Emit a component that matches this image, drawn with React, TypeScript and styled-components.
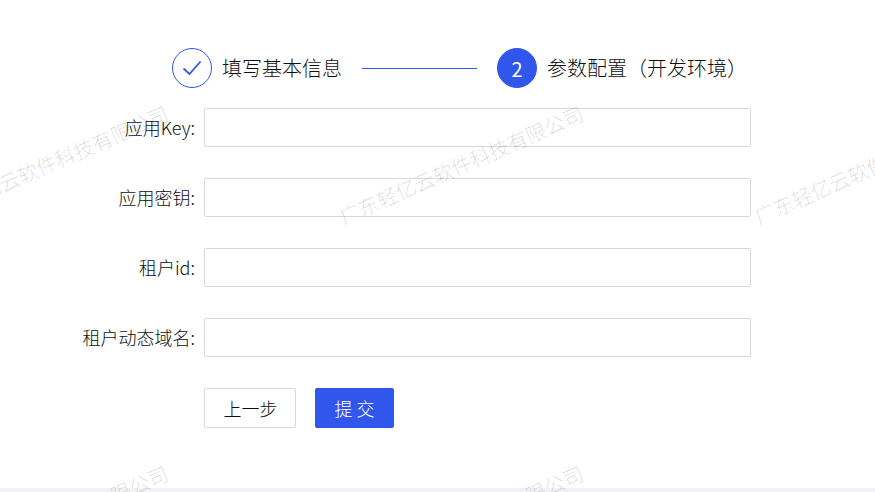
import React from "react"
import styled, { createGlobalStyle } from "styled-components"

const GlobalStyle = createGlobalStyle`
    html, body {
        margin: 0;
        padding: 0;
        background: #fff;
        overflow: hidden;
    }
    body {
        font-family: "Noto Sans CJK SC", "Noto Sans", sans-serif;
        font-weight: 300;
        color: #0f0f0f;
    }
`;

const Page = styled.div`
    position: relative;
    width: 875px;
    height: 492px;
    overflow: hidden;
    display: flex;
    flex-direction: column;
    padding-top: 48px;
    box-sizing: border-box;
    background: #fff;
`;

const Steps = styled.div`
    display: flex;
    align-items: center;
    height: 40px;
    padding-left: 172px;
    margin-bottom: 20px;
`;

const StepCircle = styled.div<{ $active?: boolean }>`
    width: 40px;
    height: 40px;
    box-sizing: border-box;
    border-radius: 50%;
    border: 1px solid #3056ec;
    background: ${p => (p.$active ? "#3056ec" : "#fff")};
    color: ${p => (p.$active ? "#fff" : "#3056ec")};
    display: flex;
    align-items: center;
    justify-content: center;
    font-size: 20px;
    font-weight: 400;
    flex: none;
`;

const StepTitle = styled.div`
    margin-left: 10px;
    font-size: 20px;
    line-height: 40px;
    white-space: nowrap;
`;

const StepLine = styled.div`
    width: 115px;
    height: 1px;
    background: #3056ec;
    margin: 0 20px;
    flex: none;
`;

const Form = styled.div`
    display: flex;
    flex-direction: column;
    gap: 30px;
`;

const FormRow = styled.div`
    display: grid;
    grid-template-columns: 195px 547px;
    column-gap: 9px;
    align-items: start;
`;

const Label = styled.label`
    font-size: 18px;
    line-height: 39px;
    height: 40px;
    text-align: right;
    white-space: nowrap;
`;

const TextInput = styled.div`
    height: 39px;
    box-sizing: border-box;
    border: 1px solid #d9d9d9;
    border-radius: 2px;
    background: transparent;
`;

const Actions = styled.div`
    display: flex;
    gap: 19px;
    padding-left: 204px;
`;

const ActionButton = styled.button<{ $primary?: boolean }>`
    height: 40px;
    width: ${p => (p.$primary ? "79px" : "92px")};
    padding: 0 0 0 ${p => (p.$primary ? "4px" : "1px")};
    box-sizing: border-box;
    border-radius: 2px;
    border: 1px solid ${p => (p.$primary ? "#3056ec" : "#d9d9d9")};
    background: ${p => (p.$primary ? "#3056ec" : "#fff")};
    color: ${p => (p.$primary ? "#fff" : "#0f0f0f")};
    font-family: inherit;
    font-weight: inherit;
    font-size: 18px;
    letter-spacing: ${p => (p.$primary ? "4px" : "0")};
`;

const BottomStrip = styled.div`
    position: absolute;
    left: 0;
    right: 0;
    bottom: 0;
    height: 4px;
    background: #f0f2f5;
`;

const Watermarks = styled.div`
    position: absolute;
    inset: 0;
    pointer-events: none;
`;

const WatermarkText = styled.span<{ $x: number; $y: number }>`
    position: absolute;
    left: ${p => p.$x - 135}px;
    top: ${p => p.$y - 15}px;
    width: 270px;
    line-height: 30px;
    text-align: center;
    font-size: 20.3px;
    color: rgba(0, 0, 0, 0.15);
    white-space: nowrap;
    transform: rotate(-23.5deg);
`;

const fields = ["应用Key:", "应用密钥:", "租户id:", "租户动态域名:"]

const marks = [
    [46, 164],
    [461, 164],
    [876, 164],
    [46, 524],
    [461, 524],
    [876, 524],
]

export default function App() {
    return <Page>
        <GlobalStyle />
        <Steps>
            <StepCircle>
                <svg width="20" height="16" viewBox="0 0 20 16" fill="none" stroke="#3056ec" strokeWidth="1.8">
                    <path d="M1.5 8.5 L7.5 14 L18.5 1.5" />
                </svg>
            </StepCircle>
            <StepTitle>填写基本信息</StepTitle>
            <StepLine />
            <StepCircle $active>2</StepCircle>
            <StepTitle>参数配置（开发环境）</StepTitle>
        </Steps>
        <Form>
            {fields.map(f => (
                <FormRow key={f}>
                    <Label>{f}</Label>
                    <TextInput />
                </FormRow>
            ))}
            <Actions>
                <ActionButton>上一步</ActionButton>
                <ActionButton $primary>提交</ActionButton>
            </Actions>
        </Form>
        <BottomStrip />
        <Watermarks>
            {marks.map(([x, y]) => (
                <WatermarkText key={`${x}-${y}`} $x={x} $y={y}>广东轻亿云软件科技有限公司</WatermarkText>
            ))}
        </Watermarks>
    </Page>
}
